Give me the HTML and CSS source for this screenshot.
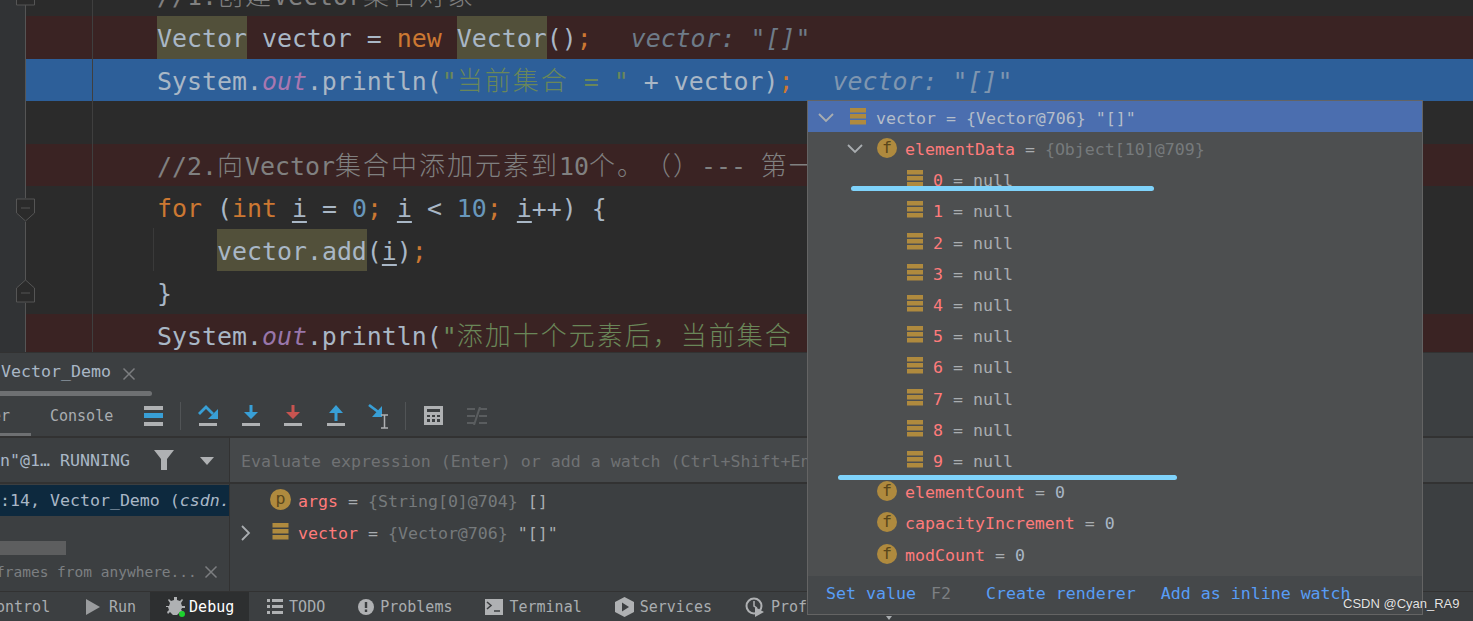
FILE: index.html
```html
<!DOCTYPE html>
<html lang="zh">
<head>
<meta charset="utf-8">
<title>Vector_Demo debug</title>
<link rel="stylesheet" href="styles.css">
</head>
<body>
<svg class="defs" width="0" height="0">
  <symbol id="fields" viewBox="0 0 16 17"><path fill="#af8a3e" d="M0 0h16v4.500H0zM0 6h16v4.500H0zM0 12h16v4.500H0z"/></symbol>
  <symbol id="down" viewBox="0 0 16 10"><path fill="none" stroke="#a9adb0" stroke-width="1.800" d="M1 1l7 7 7-7"/></symbol>
  <symbol id="close" viewBox="0 0 14 14"><path fill="none" stroke="#7c7e80" stroke-width="1.500" d="M1.500 1.500l11 11M12.500 1.500l-11 11"/></symbol>
</svg>

<main class="ide">
  <section class="editor">
    <div class="gutter"></div>
    <div class="code">
      <div class="line comment">//1.<span class="cjk">创建</span>Vector<span class="cjk">集合对象</span></div>
      <div class="line bp"><span class="hl">Vector</span> vector = <b class="kw">new</b> <span class="hl">Vector</span>()<b class="kw">;</b><i class="hint">vector: "[]"</i></div>
      <div class="line cur">System.<i class="st">out</i>.println(<span class="str">"<span class="cjk">当前集合</span> = "</span> + vector)<b class="kw">;</b><i class="hint">vector: "[]"</i></div>
      <div class="line"></div>
      <div class="line comment bp">//2.<span class="cjk">向</span>Vector<span class="cjk">集合中添加元素到</span>10<span class="cjk">个。（）</span>--- <span class="cjk">第一次扩容</span></div>
      <div class="line"><b class="kw">for</b> (<b class="kw">int</b> <u>i</u> = <span class="num">0</span><b class="kw">;</b> <u>i</u> &lt; <span class="num">10</span><b class="kw">;</b> <u>i</u>++) {</div>
      <div class="line ind"><span class="hl">vector.add</span>(<u>i</u>)<b class="kw">;</b></div>
      <div class="line">}</div>
      <div class="line bp">System.<i class="st">out</i>.println(<span class="str">"<span class="cjk">添加十个元素后，当前集合</span> = "</span> + vector)<b class="kw">;</b></div>
    </div>
    <span class="gutter-rule"></span>
    <span class="indent-rule"></span>
    <svg class="folds" width="22" height="352" viewBox="0 0 22 352">
      <path fill="none" stroke="#555" d="M9.500 5V198M9.500 222V281M9.500 303V352"/>
      <path fill="#2b2b2b" stroke="#555" d="M.5-5h18v10H.5z"/>
      <path fill="#2b2b2b" stroke="#555" d="M.5 199h18v14l-9 8-9-8z"/>
      <path fill="none" stroke="#555" d="M5 208h9"/>
      <path fill="#2b2b2b" stroke="#555" d="M.5 302h18v-14l-9-8-9 8z"/>
      <path fill="none" stroke="#555" d="M5 293h9"/>
    </svg>
  </section>

  <section class="debug">
    <header class="tabs">
      <span class="tab-title">Vector_Demo</span>
      <svg class="tab-close" width="14" height="14"><use href="#close"/></svg>
    </header>
    <span class="tab-scroll"></span>

    <nav class="toolbar">
      <span class="tool-tab on">er</span>
      <span class="tool-tab">Console</span>
      <svg class="tool first" width="20" height="22" viewBox="0 0 20 22"><path fill="#afb1b3" d="M0 1h19v4H0zM0 17h19v4H0z"/><path fill="#389fd6" d="M0 8h19v5H0z"/></svg>
      <span class="tool-sep"></span>
      <svg class="tool step" width="20" height="24" viewBox="0 0 20 24"><path fill="none" stroke="#389fd6" stroke-width="2.800" d="M1 10l7-7 7 7"/><path fill="#389fd6" d="M20 5v10h-10z"/><path fill="#afb1b3" d="M1 19h18v3H1z"/></svg>
      <svg class="tool step2" width="20" height="24" viewBox="0 0 20 24"><path fill="#389fd6" d="M8.500 1h3v7H17l-7 7-7-7h5.500z"/><path fill="#afb1b3" d="M1 19h18v3H1z"/></svg>
      <svg class="tool step2" width="20" height="24" viewBox="0 0 20 24"><path fill="#c75450" d="M8.500 1h3v7H17l-7 7-7-7h5.500z"/><path fill="#afb1b3" d="M1 19h18v3H1z"/></svg>
      <svg class="tool step2" width="20" height="24" viewBox="0 0 20 24"><path fill="#389fd6" d="M10 1l7 8h-5.500v8h-3V9H3z"/><path fill="#afb1b3" d="M1 19h18v3H1z"/></svg>
      <svg class="tool step2" width="22" height="26" viewBox="0 0 22 26"><path fill="none" stroke="#389fd6" stroke-width="2.800" d="M1 2l10 7.500"/><path fill="#389fd6" d="M14 3v11H4z"/><path fill="none" stroke="#afb1b3" stroke-width="1.500" d="M13 12h7M13 25h7M16.500 12v13"/></svg>
      <span class="tool-sep b"></span>
      <svg class="tool calc" width="20" height="20" viewBox="0 0 20 20"><path fill="#afb1b3" d="M0 0h19v19H0z"/><path fill="#3c3f41" d="M3 3h13v3H3zM3 9h3v2H3zM8 9h3v2H8zM13 9h3v2h-3zM3 13h3v3H3zM8 13h3v3H8zM13 13h3v3h-3z"/></svg>
      <svg class="tool calc2" width="20" height="18" viewBox="0 0 20 18"><path fill="none" stroke="#5a5d5f" stroke-width="2" d="M0 2h8M0 9h8M0 16h8M12 2h8M12 9h8M12 16h8M13 0L7 18"/></svg>
    </nav>

    <div class="panes">
      <aside class="frames">
        <div class="thread">
          <span class="thread-name">n"@1… RUNNING</span>
          <svg class="funnel" width="20" height="20" viewBox="0 0 20 20"><path fill="#afb1b3" d="M0 0h20l-7 9v11H7V9z"/></svg>
          <svg class="caret" width="14" height="8" viewBox="0 0 14 8"><path fill="#afb1b3" d="M0 0h14l-7 8z"/></svg>
        </div>
        <div class="frame">:14, Vector_Demo (<i>csdn.</i></div>
        <span class="frame-blur"></span>
        <div class="switch">
          <span class="switch-text">frames from anywhere...</span>
          <svg width="14" height="14"><use href="#close"/></svg>
        </div>
      </aside>
      <div class="vars">
        <div class="watch">Evaluate expression (Enter) or add a watch (Ctrl+Shift+Enter)</div>
        <div class="var arg"><span class="badge big">p</span><span class="name">args</span><span class="eq"> = </span><span class="ref">{String[0]@704}</span><span class="eq"> []</span></div>
        <div class="var"><svg class="var-arrow" width="10" height="16" viewBox="0 0 10 16"><path fill="none" stroke="#a9adb0" stroke-width="1.800" d="M1 1l7 7-7 7"/></svg><svg class="var-ic" width="17" height="17"><use href="#fields"/></svg><span class="name">vector</span><span class="eq"> = </span><span class="ref">{Vector@706}</span><span class="eq"> "[]"</span></div>
      </div>
    </div>

    <footer class="status">
      <span class="st-item clip">ontrol</span>
      <span class="st-item run"><svg width="14" height="16" viewBox="0 0 14 16"><path fill="#9a9c9e" d="M0 0l14 8-14 8z"/></svg>Run</span>
      <span class="st-item active"><svg width="19" height="20" viewBox="0 0 19 20"><path fill="#afb1b3" d="M8 0h3v3l3 1 2-2 1 1-2 3 1 3h3v2h-3l-1 2 3 2-1 2-3-2-3 3H7l-3-3-2 2-1-2 2-2-1-3H0V9h3l1-3-2-3 1-1 2 2 3-1z"/><circle cx="16" cy="17" r="3" fill="#1dd12e"/></svg>Debug</span>
      <span class="st-item todo"><svg width="16" height="15" viewBox="0 0 16 15"><path fill="#afb1b3" d="M0 0h3v3H0zM5 0h11v3H5zM0 6h3v3H0zM5 6h11v3H5zM0 12h3v3H0zM5 12h11v3H5z"/></svg>TODO</span>
      <span class="st-item"><svg width="16" height="16" viewBox="0 0 16 16"><circle cx="8" cy="8" r="8" fill="#afb1b3"/><path fill="#3c3f41" d="M6.800 3h2.400v6H6.800zM6.800 10.500h2.400V13H6.800z"/></svg>Problems</span>
      <span class="st-item"><svg width="18" height="16" viewBox="0 0 18 16"><path fill="#afb1b3" d="M0 0h18v16H0z"/><path fill="none" stroke="#3c3f41" stroke-width="1.600" d="M2 3l4 3.500L2 10M9 12h6"/></svg>Terminal</span>
      <span class="st-item"><svg width="19" height="20" viewBox="0 0 19 20"><path fill="#afb1b3" d="M9.500 0L19 5v10l-9.500 5L0 15V5z"/><path fill="#3c3f41" d="M7 5.500l7 4.500-7 4.500z"/></svg>Services</span>
      <span class="st-item"><svg width="20" height="20" viewBox="0 0 20 20"><circle cx="9" cy="9" r="7.500" fill="none" stroke="#afb1b3" stroke-width="2"/><path fill="none" stroke="#afb1b3" stroke-width="1.500" d="M9 4v5l3 2"/><path fill="#afb1b3" d="M10 10l9 5-9 5z"/></svg>Profiler</span>
    </footer>
  </section>

  <section class="popup">
    <div class="tree">
      <div class="row head"><svg class="arrow" width="16" height="10"><use href="#down"/></svg><svg class="fi" width="16" height="17"><use href="#fields"/></svg><span class="eqh">vector = {Vector@706} "[]"</span></div>
      <div class="row l1"><svg class="arrow" width="16" height="10"><use href="#down"/></svg><span class="badge">f</span><span class="name">elementData</span><span class="eq"> = </span><span class="ref">{Object[10]@709}</span></div>
      <div class="row l2"><svg class="fi" width="16" height="17"><use href="#fields"/></svg><span class="name">0</span><span class="eq"> = null</span></div>
      <div class="row l2"><svg class="fi" width="16" height="17"><use href="#fields"/></svg><span class="name">1</span><span class="eq"> = null</span></div>
      <div class="row l2"><svg class="fi" width="16" height="17"><use href="#fields"/></svg><span class="name">2</span><span class="eq"> = null</span></div>
      <div class="row l2"><svg class="fi" width="16" height="17"><use href="#fields"/></svg><span class="name">3</span><span class="eq"> = null</span></div>
      <div class="row l2"><svg class="fi" width="16" height="17"><use href="#fields"/></svg><span class="name">4</span><span class="eq"> = null</span></div>
      <div class="row l2"><svg class="fi" width="16" height="17"><use href="#fields"/></svg><span class="name">5</span><span class="eq"> = null</span></div>
      <div class="row l2"><svg class="fi" width="16" height="17"><use href="#fields"/></svg><span class="name">6</span><span class="eq"> = null</span></div>
      <div class="row l2"><svg class="fi" width="16" height="17"><use href="#fields"/></svg><span class="name">7</span><span class="eq"> = null</span></div>
      <div class="row l2"><svg class="fi" width="16" height="17"><use href="#fields"/></svg><span class="name">8</span><span class="eq"> = null</span></div>
      <div class="row l2"><svg class="fi" width="16" height="17"><use href="#fields"/></svg><span class="name">9</span><span class="eq"> = null</span></div>
      <div class="row l1b"><span class="badge">f</span><span class="name">elementCount</span><span class="eq"> = </span><span class="val">0</span></div>
      <div class="row l1b"><span class="badge">f</span><span class="name">capacityIncrement</span><span class="eq"> = </span><span class="val">0</span></div>
      <div class="row l1b"><span class="badge">f</span><span class="name">modCount</span><span class="eq"> = </span><span class="val">0</span></div>
    </div>
    <div class="actions">
      <a class="set">Set value</a><span class="key">F2</span>
      <a class="create">Create renderer</a>
      <a class="inline">Add as inline watch</a>
    </div>
  </section>

  <span class="mark mark-a"></span>
  <span class="mark mark-b"></span>
  <span class="pip"></span>
  <span class="watermark">CSDN @Cyan_RA9</span>
</main>
</body>
</html>
```

FILE: styles.css
```css
* { box-sizing: border-box; }
html, body { margin: 0; height: 100%; overflow: hidden; background: #3c3f41; }
.defs { position: absolute; }
.ide {
  position: relative;
  width: 1473px;
  height: 621px;
  overflow: hidden;
  display: flex;
  flex-direction: column;
  font-family: "DejaVu Sans Mono", "Noto Sans CJK SC", monospace;
}

/* editor */
.editor {
  position: relative;
  height: 352px;
  flex: none;
  display: flex;
  overflow: hidden;
  background: #2b2b2b;
}
.gutter { width: 26px; flex: none; background: #313335; }
.code {
  flex: 1;
  margin-top: -26.5px;
  font-size: 24.9px;
  color: #a9b7c6;
}
.line {
  height: 42.5px;
  line-height: 45.5px;
  padding-left: 131px;
  white-space: nowrap;
  overflow: hidden;
}
.line b { font-weight: 400; }
.line u { text-decoration-thickness: 2px; text-underline-offset: 4px; }
.bp { background: #3a2323; }
.cur { background: #2d5f99; }
.ind { padding-left: 191px; }
.comment { color: #808080; }
.kw { color: #cc7832; }
.num { color: #6897bb; }
.st { color: #9876aa; }
.str { color: #6a8759; }
.cjk { font-size: 26px; letter-spacing: 2px; font-weight: 300; text-spacing-trim: space-all; }
.hl { display: inline-block; height: 42.5px; background: #52503a; vertical-align: top; }
.hint { color: #6e7b88; margin-left: 39px; }
.cur .hint { color: #7f96b0; }
.cur .st { color: #a877b0; }
.gutter-rule { position: absolute; left: 92px; top: 0; width: 1px; height: 352px; background: #3f3f3f; }
.indent-rule { position: absolute; left: 153px; top: 228px; width: 1px; height: 43px; background: #3a3a3a; }
.folds { position: absolute; left: 16px; top: 0; }

/* debug panel */
.debug {
  flex: 1;
  display: flex;
  flex-direction: column;
  position: relative;
  min-height: 0;
  background: #3c3f41;
  color: #a9adb0;
  border-top: 1px solid #323232;
}
.tabs { height: 38px; flex: none; display: flex; align-items: center; padding-left: 1px; padding-bottom: 2px; font-size: 16.6px; }
.tab-title { color: #a9b7c6; }
.tab-close { margin-left: 11px; margin-top: 5px; }
.tab-scroll { height: 5px; width: 152px; flex: none; background: #6e7072; border-radius: 0 3px 3px 0; }
.toolbar {
  height: 42px;
  flex: none;
  display: flex;
  align-items: center;
  border-bottom: 2px solid #323232;
  font-size: 15px;
}
.tool-tab { height: 40px; line-height: 40px; color: #a9adb0; }
.tool-tab.on { width: 31px; border-bottom: 3px solid #6e7072; margin-right: 19px; text-indent: -8px; overflow: hidden; }
.tool { flex: none; }
.tool.first { margin-left: 31px; }
.tool-sep { width: 1px; height: 28px; background: #515456; margin-left: 16px; margin-right: 17px; flex: none; }
.tool-sep.b { margin-left: 15px; margin-right: 18px; }
.tool.step2 { margin-left: 22.5px; }
.tool.calc2 { margin-left: 23px; }
.panes { flex: 1; display: flex; min-height: 0; }
.frames { width: 230px; flex: none; border-right: 1px solid #323232; display: flex; flex-direction: column; overflow: hidden; }
.thread { height: 46px; flex: none; display: flex; align-items: center; border-bottom: 2px solid #323232; font-size: 16.6px; white-space: nowrap; }
.thread-name { width: 154px; flex: none; color: #a9b7c6; }
.caret { margin-left: 26px; margin-top: 2px; }
.frame { height: 31px; flex: none; margin-top: 1px; background: #0d293e; line-height: 32px; font-size: 16.6px; color: #a9b7c6; white-space: nowrap; overflow: hidden; }
.frame-blur { width: 66px; height: 14px; flex: none; background: #5d5e5f; margin-top: 25px; }
.switch { display: flex; align-items: center; margin-top: 8px; height: 18px; color: #7c7f82; white-space: nowrap; }
.switch-text { font-size: 14.5px; margin-left: -4px; width: 208px; flex: none; }
.vars { flex: 1; min-width: 0; font-size: 16.6px; overflow: hidden; white-space: nowrap; }
.watch { height: 46px; line-height: 47px; padding-left: 11px; background: #45484a; border-bottom: 2px solid #323232; color: #707274; }
.var { height: 32px; display: flex; align-items: center; white-space: pre; color: #a9adb0; }
.var.arg { padding-left: 40px; margin-top: 1px; }
.var.arg .badge { width: 21px; height: 21px; margin-right: 7px; }
.var-arrow { margin-left: 11px; margin-right: 21px; }
.var-ic { margin-right: 9px; margin-top: -3px; }
.name { color: #ff7b7b; }
.eq { color: #a9adb0; }
.ref { color: #767a7c; }
.val { color: #a9b7c6; }
.badge {
  flex: none;
  width: 20px;
  height: 20px;
  margin-right: 8px;
  margin-top: -3px;
  border-radius: 50%;
  background: #af8a3e;
  color: #5a461b;
  font-size: 16.6px;
  line-height: 19px;
  text-align: center;
}

/* bottom bar */
.status {
  height: 30px;
  flex: none;
  display: flex;
  align-items: stretch;
  border-top: 1px solid #323232;
  font-size: 15px;
  white-space: nowrap;
}
.st-item { display: flex; align-items: center; gap: 6px; margin-left: 33px; }
.st-item.clip { margin-left: -13px; padding-left: 9px; width: 63px; }
.st-item.run { margin-left: 36px; gap: 9px; }
.st-item.active { margin-left: 14px; width: 99px; padding-left: 16px; gap: 4px; background: #2d2f30; color: #fff; }
.st-item.todo { margin-left: 18px; }

/* value popup */
.popup {
  position: absolute;
  left: 807px;
  top: 100px;
  width: 616px;
  height: 515px;
  background: #4d4f50;
  border: 1px solid #646464;
  display: flex;
  flex-direction: column;
  font-size: 16.6px;
}
.tree { flex: 1; min-height: 0; }
.row { height: 31.2px; padding-top: 4px; display: flex; align-items: center; white-space: pre; }
.row.head { height: 31px; background: #4b6eaf; padding-left: 10px; color: #bcc3cf; }
.arrow { flex: none; margin-right: 16px; margin-top: -2px; }
.l1 .arrow { margin-right: 14px; }
.fi { flex: none; margin-right: 10px; margin-top: -4px; }
.eqh { color: #b4bdc9; }
.l1 { padding-left: 39px; }
.l1b { padding-left: 69px; }
.l2 { padding-left: 99px; }
.actions {
  height: 38px;
  flex: none;
  display: flex;
  align-items: center;
  background: #45484a;
  padding-left: 18px;
  padding-bottom: 4px;
  color: #589df6;
  white-space: nowrap;
}
.key { color: #7c7f82; margin-left: 15px; }
.create { margin-left: 35px; }
.inline { margin-left: 25px; }

/* overlays */
.mark { position: absolute; height: 5px; background: #7fd3fb; border-radius: 3px; }
.mark-a { left: 851px; top: 186px; width: 303px; }
.mark-b { left: 838px; top: 475px; width: 339px; }
.pip { position: absolute; left: 886px; top: 616px; border: 3px solid transparent; border-top: 4px solid #a9adb0; }
.watermark {
  position: absolute;
  left: 1343px;
  top: 596px;
  font: 13px "Liberation Sans", sans-serif;
  color: #e4e4e4;
  text-shadow: 0 0 1px #222;
  white-space: nowrap;
}
```
